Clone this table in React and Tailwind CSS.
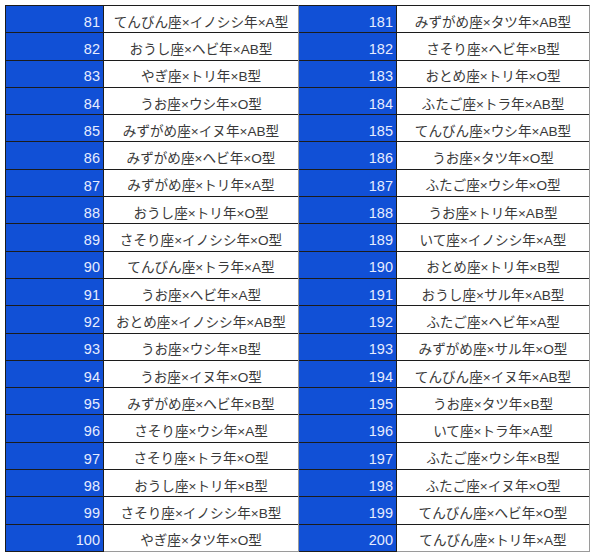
import React from 'react';

const left = [
  [81, 'てんびん座×イノシシ年×A型'],
  [82, 'おうし座×ヘビ年×AB型'],
  [83, 'やぎ座×トリ年×B型'],
  [84, 'うお座×ウシ年×O型'],
  [85, 'みずがめ座×イヌ年×AB型'],
  [86, 'みずがめ座×ヘビ年×O型'],
  [87, 'みずがめ座×トリ年×A型'],
  [88, 'おうし座×トリ年×O型'],
  [89, 'さそり座×イノシシ年×O型'],
  [90, 'てんびん座×トラ年×A型'],
  [91, 'うお座×ヘビ年×A型'],
  [92, 'おとめ座×イノシシ年×AB型'],
  [93, 'うお座×ウシ年×B型'],
  [94, 'うお座×イヌ年×O型'],
  [95, 'みずがめ座×ヘビ年×B型'],
  [96, 'さそり座×ウシ年×A型'],
  [97, 'さそり座×トラ年×O型'],
  [98, 'おうし座×トリ年×B型'],
  [99, 'さそり座×イノシシ年×B型'],
  [100, 'やぎ座×タツ年×O型'],
];

const right = [
  [181, 'みずがめ座×タツ年×AB型'],
  [182, 'さそり座×ヘビ年×B型'],
  [183, 'おとめ座×トリ年×O型'],
  [184, 'ふたご座×トラ年×AB型'],
  [185, 'てんびん座×ウシ年×AB型'],
  [186, 'うお座×タツ年×O型'],
  [187, 'ふたご座×ウシ年×O型'],
  [188, 'うお座×トリ年×AB型'],
  [189, 'いて座×イノシシ年×A型'],
  [190, 'おとめ座×トリ年×B型'],
  [191, 'おうし座×サル年×AB型'],
  [192, 'ふたご座×ヘビ年×A型'],
  [193, 'みずがめ座×サル年×O型'],
  [194, 'てんびん座×イヌ年×AB型'],
  [195, 'うお座×タツ年×B型'],
  [196, 'いて座×トラ年×A型'],
  [197, 'ふたご座×ウシ年×B型'],
  [198, 'ふたご座×イヌ年×O型'],
  [199, 'てんびん座×ヘビ年×O型'],
  [200, 'てんびん座×トリ年×A型'],
];

const Table = ({ rows, whiteWidth, edge }) => (
  <div className={`flex flex-col border-t border-[#1c1c1c] ${edge}`}>
    {rows.map(([num, label], i) => (
      <div key={num} className="flex h-[27.3px]">
        <div className="w-[98px] bg-[#1150d6] border-b border-r border-[#1c1c1c] flex items-end justify-end pr-[3px] pb-[3px] text-[14.5px] leading-none text-[#e6ecff]">
          {num}
        </div>
        <div
          className={`${whiteWidth} bg-white border-b ${i === rows.length - 1 ? 'border-[#9a9a9a]' : 'border-[#1c1c1c]'} flex items-end justify-center pb-[3px] text-[13.6px] leading-none text-[#3a3a3a]`}
        >
          {label}
        </div>
      </div>
    ))}
  </div>
);

export default function App() {
  return (
    <div
      className="bg-white w-[595px] h-[558px] pt-[5px] pl-[5px]"
      style={{ fontFamily: '"Liberation Sans", "Noto Sans CJK JP", sans-serif' }}
    >
      <div className="flex">
        <Table rows={left} whiteWidth="w-[194px]" edge="border-l border-l-[#1c1c1c]" />
        <Table rows={right} whiteWidth="w-[192px]" edge="border-l border-l-[#9a9a9a] border-r border-r-[#9a9a9a]" />
      </div>
    </div>
  );
}
